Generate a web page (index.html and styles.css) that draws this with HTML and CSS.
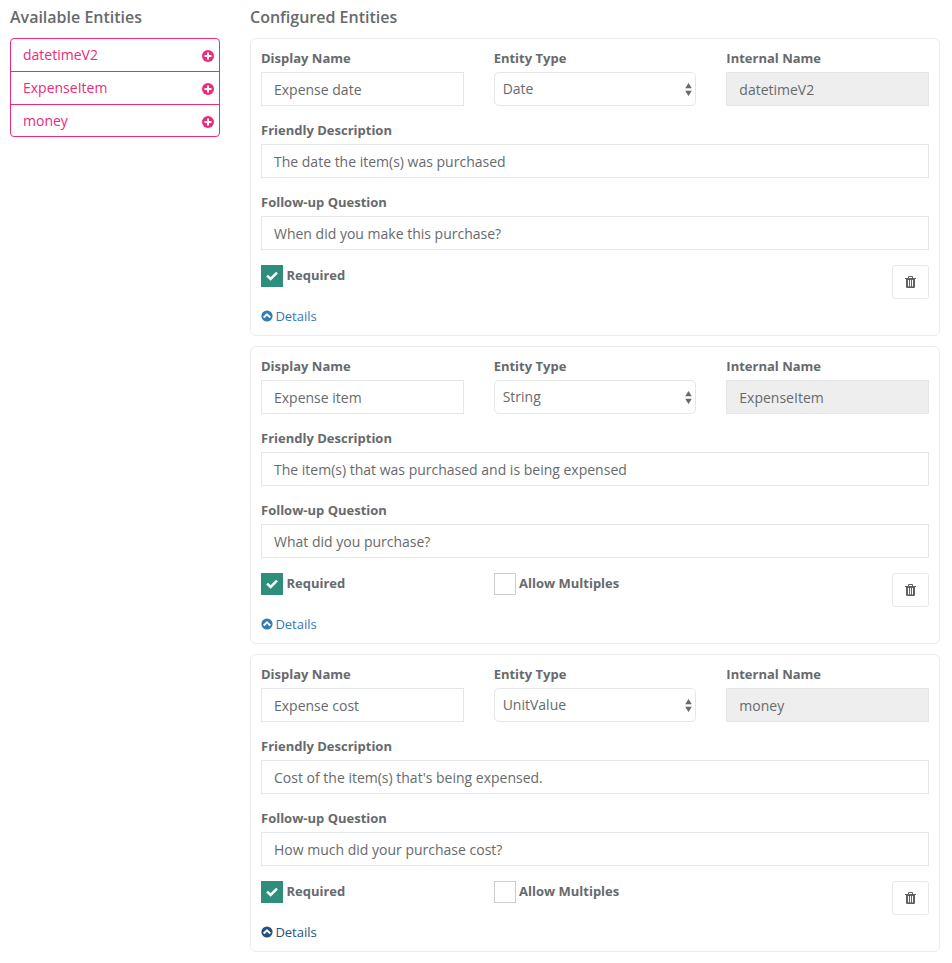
FILE: index.html
```html
<!DOCTYPE html>
<html lang="en">
<head>
<meta charset="utf-8">
<title>Entities</title>
<link rel="stylesheet" href="styles.css">
</head>
<body>
<svg class="sprite" aria-hidden="true">
  <symbol id="plus" viewBox="0 0 12 12"><circle cx="6" cy="6" r="6" fill="currentColor"/><path d="M6 2.5v7M2.5 6h7" stroke="#fff" stroke-width="2"/></symbol>
  <symbol id="up" viewBox="0 0 12 12"><circle cx="6" cy="6" r="5.6" fill="currentColor"/><path d="M2.7 7.5 6 4.3l3.3 3.2" fill="none" stroke="#fff" stroke-width="2"/></symbol>
  <symbol id="check" viewBox="0 0 22 22"><path d="M6.1 10.6 9.6 14 16 7.7" fill="none" stroke="#fff" stroke-width="2.5"/></symbol>
  <symbol id="sort" viewBox="0 0 7 13"><path d="M3.5 0 6.8 5.3H.2zM3.5 13 .2 7.7h6.6z" fill="currentColor"/></symbol>
  <symbol id="trash" viewBox="0 0 11 12"><path d="M3.5 2V.5h4V2M0 2.5h11" fill="none" stroke="currentColor"/><path d="M1 2.5h9V11q0 1-1 1H2q-1 0-1-1z" fill="currentColor"/><path d="M3.5 4v6.4M5.5 4v6.4M7.5 4v6.4" stroke="#fff"/></symbol>
</svg>
<main class="layout">
  <section>
    <h2 class="heading">Available Entities</h2>
    <ul class="available">
      <li class="available-item">datetimeV2<svg class="plus"><use href="#plus"/></svg></li>
      <li class="available-item">ExpenseItem<svg class="plus"><use href="#plus"/></svg></li>
      <li class="available-item">money<svg class="plus"><use href="#plus"/></svg></li>
    </ul>
  </section>
  <section>
    <h2 class="heading">Configured Entities</h2>
    <div class="cards">
      <article class="card">
        <div class="columns">
          <label class="field"><span class="label">Display Name</span><input class="input" value="Expense date"></label>
          <label class="field"><span class="label">Entity Type</span><span class="select-wrap"><select class="input select"><option>Date</option></select><svg class="sort"><use href="#sort"/></svg></span></label>
          <label class="field"><span class="label">Internal Name</span><input class="input" value="datetimeV2" disabled></label>
        </div>
        <label class="field"><span class="label">Friendly Description</span><input class="input" value="The date the item(s) was purchased"></label>
        <label class="field"><span class="label">Follow-up Question</span><input class="input" value="When did you make this purchase?"></label>
        <div class="columns">
          <div class="check"><span class="box box-on"><svg class="tick"><use href="#check"/></svg></span><span class="check-label">Required</span></div>
          <div></div>
          <button class="delete" aria-label="Delete"><svg class="trash"><use href="#trash"/></svg></button>
        </div>
        <a class="details"><svg class="up"><use href="#up"/></svg>Details</a>
      </article>
      <article class="card">
        <div class="columns">
          <label class="field"><span class="label">Display Name</span><input class="input" value="Expense item"></label>
          <label class="field"><span class="label">Entity Type</span><span class="select-wrap"><select class="input select"><option>String</option></select><svg class="sort"><use href="#sort"/></svg></span></label>
          <label class="field"><span class="label">Internal Name</span><input class="input" value="ExpenseItem" disabled></label>
        </div>
        <label class="field"><span class="label">Friendly Description</span><input class="input" value="The item(s) that was purchased and is being expensed"></label>
        <label class="field"><span class="label">Follow-up Question</span><input class="input" value="What did you purchase?"></label>
        <div class="columns">
          <div class="check"><span class="box box-on"><svg class="tick"><use href="#check"/></svg></span><span class="check-label">Required</span></div>
          <div class="check"><span class="box"></span><span class="check-label">Allow Multiples</span></div>
          <button class="delete" aria-label="Delete"><svg class="trash"><use href="#trash"/></svg></button>
        </div>
        <a class="details"><svg class="up"><use href="#up"/></svg>Details</a>
      </article>
      <article class="card">
        <div class="columns">
          <label class="field"><span class="label">Display Name</span><input class="input" value="Expense cost"></label>
          <label class="field"><span class="label">Entity Type</span><span class="select-wrap"><select class="input select"><option>UnitValue</option></select><svg class="sort"><use href="#sort"/></svg></span></label>
          <label class="field"><span class="label">Internal Name</span><input class="input" value="money" disabled></label>
        </div>
        <label class="field"><span class="label">Friendly Description</span><input class="input" value="Cost of the item(s) that's being expensed."></label>
        <label class="field"><span class="label">Follow-up Question</span><input class="input" value="How much did your purchase cost?"></label>
        <div class="columns">
          <div class="check"><span class="box box-on"><svg class="tick"><use href="#check"/></svg></span><span class="check-label">Required</span></div>
          <div class="check"><span class="box"></span><span class="check-label">Allow Multiples</span></div>
          <button class="delete" aria-label="Delete"><svg class="trash"><use href="#trash"/></svg></button>
        </div>
        <a class="details details-active"><svg class="up"><use href="#up"/></svg>Details</a>
      </article>
    </div>
  </section>
</main>
</body>
</html>
```

FILE: styles.css
```css
* { box-sizing: border-box; }
body {
  margin: 0;
  background: #fff;
  color: #676a6c;
  font: 14px/20px "Open Sans", sans-serif;
}
.sprite { display: none; }
.layout {
  display: grid;
  grid-template-columns: 210px 690px;
  column-gap: 30px;
  padding: 7px 0 0 10px;
}
.heading {
  margin: 0 0 11px;
  font-size: 16px;
  line-height: 20px;
  font-weight: 600;
}
.available {
  margin: 0;
  padding: 0;
  list-style: none;
  height: 99px;
  border: 1px solid #ed2a7b;
  border-radius: 4px;
  color: #ed2a7b;
}
.available-item {
  display: flex;
  align-items: center;
  justify-content: space-between;
  height: 33px;
  padding: 0 5px 0 12px;
}
.available-item:not(:last-child) { border-bottom: 1px solid #ed2a7b; }
.available-item:last-child { height: 32px; }
.plus { width: 12px; height: 12px; margin-top: 2px; }
.cards { display: flex; flex-direction: column; gap: 10px; }
.card {
  height: 298px;
  padding: 10px;
  border: 1px solid #ebebeb;
  border-radius: 6px;
}
.columns {
  display: grid;
  grid-template-columns: repeat(3, 1fr);
  column-gap: 30px;
}
.field { display: block; margin-bottom: 15px; }
.label {
  display: block;
  margin-bottom: 5px;
  font-size: 13px;
  line-height: 18px;
  font-weight: 700;
}
.input {
  display: block;
  width: 100%;
  height: 34px;
  margin: 0;
  padding: 1px 12px 0;
  border: 1px solid #e5e6e7;
  border-radius: 0;
  background: #fff;
  color: inherit;
  font: inherit;
}
.input:disabled { background: #eee; }
.select-wrap { display: block; position: relative; }
.select {
  appearance: none;
  padding: 0 8px 1px;
  border-radius: 5px;
  opacity: 1;
}
.sort {
  position: absolute;
  right: 4.5px;
  top: 10.5px;
  width: 7px;
  height: 13px;
}
.check { display: flex; align-items: flex-start; gap: 3.4px; }
.box {
  width: 22px;
  height: 22px;
  border: 1px solid #cfcdc8;
  background: #fff;
}
.box-on { border: 0; background: #2d8f7b; }
.tick { display: block; width: 22px; height: 22px; }
.check-label { font-size: 13px; line-height: 20px; font-weight: 700; }
.delete {
  display: flex;
  align-items: center;
  justify-content: center;
  justify-self: end;
  width: 37px;
  height: 34px;
  padding: 0;
  border: 1px solid #e7eaec;
  border-radius: 3px;
  background: #fff;
  color: #5f6264;
}
.trash { width: 11px; height: 12px; }
.details {
  display: flex;
  align-items: center;
  gap: 2.4px;
  margin-top: 7px;
  color: #337ab7;
  font-size: 13px;
}
.details-active { color: #23527c; }
.up { width: 12px; height: 12px; }
```
